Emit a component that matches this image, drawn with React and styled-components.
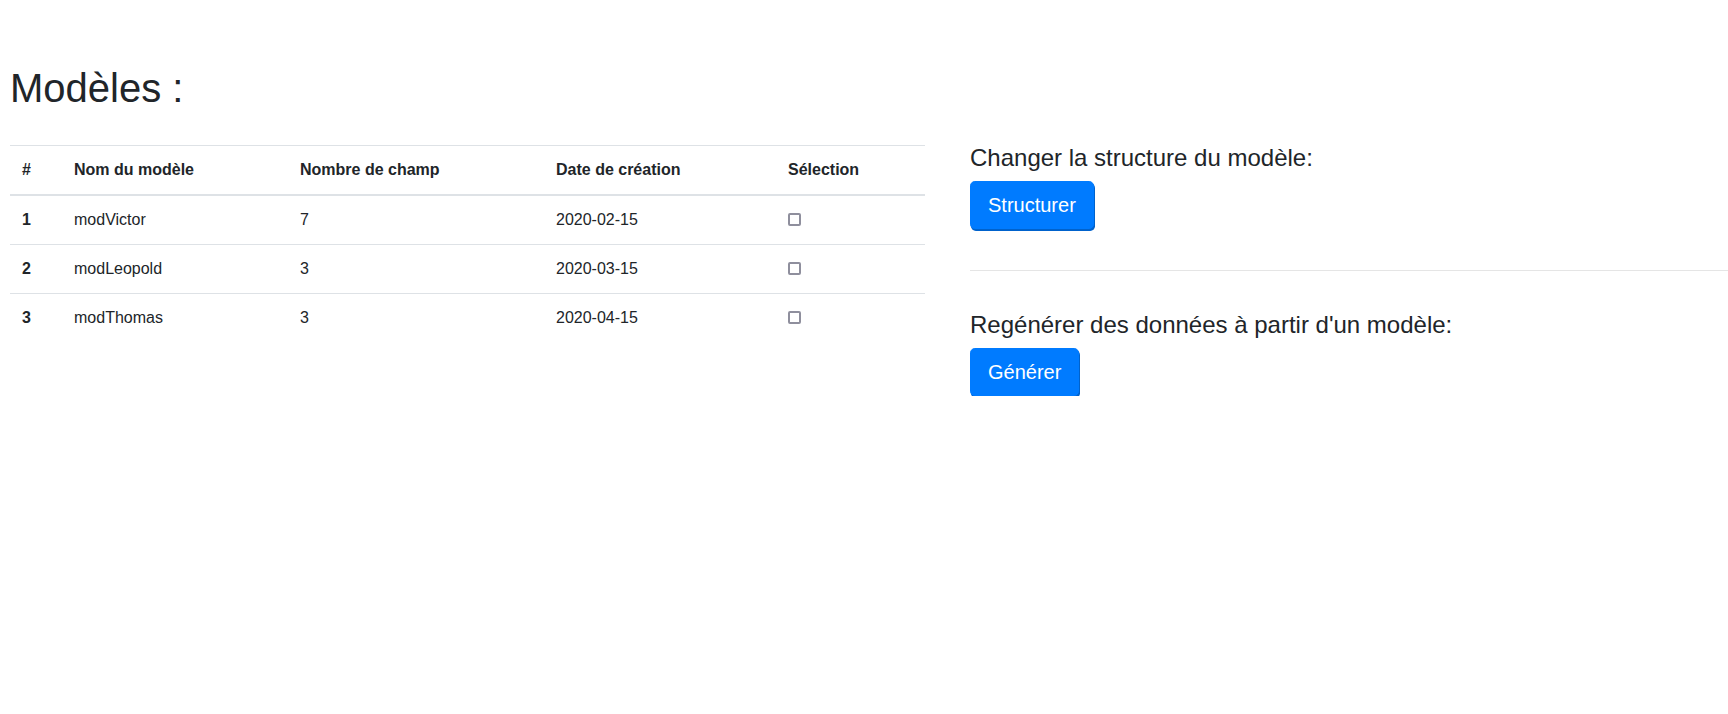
import styled, { createGlobalStyle } from 'styled-components';

const GlobalStyle = createGlobalStyle`
  *, *::before, *::after {
    box-sizing: border-box;
  }

  body {
    margin: 0;
    overflow-x: hidden;
    background: #fff;
    color: #212529;
    font-family: 'Liberation Sans', Arial, sans-serif;
    font-size: 16px;
    line-height: 1.5;
  }
`;

const Page = styled.div`
  padding: 64px 0 0 10px;
`;

const Title = styled.h1`
  margin: 0;
  font-size: 40px;
  font-weight: 400;
  line-height: 1.2;
`;

const Row = styled.div`
  display: grid;
  grid-template-columns: 915px 1fr;
  align-items: start;
  gap: 45px;
  margin-top: 33px;
`;

const Table = styled.table`
  width: 100%;
  border-collapse: collapse;
  table-layout: fixed;
`;

const HeadCell = styled.th`
  width: ${(p) => p.w}px;
  padding: 12px;
  text-align: left;
  font-weight: 700;
  vertical-align: bottom;
  border-top: 1px solid #dee2e6;
  border-bottom: 2px solid #dee2e6;
`;

const Cell = styled.td`
  padding: 12px;
  vertical-align: top;
  border-top: 1px solid #dee2e6;
  font-weight: ${(p) => (p.bold ? 700 : 400)};
`;

const Check = styled.input.attrs({ type: 'checkbox' })`
  appearance: none;
  display: inline-block;
  width: 13px;
  height: 13px;
  margin: 0;
  vertical-align: -1px;
  border: 2px solid #8f8f9d;
  border-radius: 2px;
  background: #fff;
`;

const Side = styled.div`
  margin-top: -1px;
`;

const SectionTitle = styled.h4`
  margin: 0 0 8px;
  font-size: 24px;
  font-weight: 400;
  line-height: 1.2;
`;

const Button = styled.button`
  display: inline-block;
  padding: 8px 17px;
  font-family: inherit;
  font-size: 20px;
  line-height: 1.5;
  color: #fff;
  background: #007bff;
  border: 1px solid #007bff;
  border-radius: 4.8px;
  box-shadow: 1px 2px 0 #0062cc;
  cursor: pointer;
`;

const Divider = styled.hr`
  margin: 41px 0 40px;
  border: 0;
  border-top: 1px solid rgba(0, 0, 0, 0.1);
`;

const columns = [
  { label: '#', w: 52 },
  { label: 'Nom du modèle', w: 226 },
  { label: 'Nombre de champ', w: 256 },
  { label: 'Date de création', w: 232 },
  { label: 'Sélection', w: 149 },
];

const models = [
  { id: 1, name: 'modVictor', fields: 7, date: '2020-02-15' },
  { id: 2, name: 'modLeopold', fields: 3, date: '2020-03-15' },
  { id: 3, name: 'modThomas', fields: 3, date: '2020-04-15' },
];

const App = () => (
  <>
    <GlobalStyle />
    <Page>
      <Title>Modèles :</Title>
      <Row>
        <Table>
          <thead>
            <tr>
              {columns.map((c) => (
                <HeadCell key={c.label} w={c.w}>{c.label}</HeadCell>
              ))}
            </tr>
          </thead>
          <tbody>
            {models.map((m) => (
              <tr key={m.id}>
                <Cell bold>{m.id}</Cell>
                <Cell>{m.name}</Cell>
                <Cell>{m.fields}</Cell>
                <Cell>{m.date}</Cell>
                <Cell><Check /></Cell>
              </tr>
            ))}
          </tbody>
        </Table>
        <Side>
          <SectionTitle>Changer la structure du modèle:</SectionTitle>
          <Button>Structurer</Button>
          <Divider />
          <SectionTitle>Regénérer des données à partir d'un modèle:</SectionTitle>
          <Button>Générer</Button>
        </Side>
      </Row>
    </Page>
  </>
);

export default App;
